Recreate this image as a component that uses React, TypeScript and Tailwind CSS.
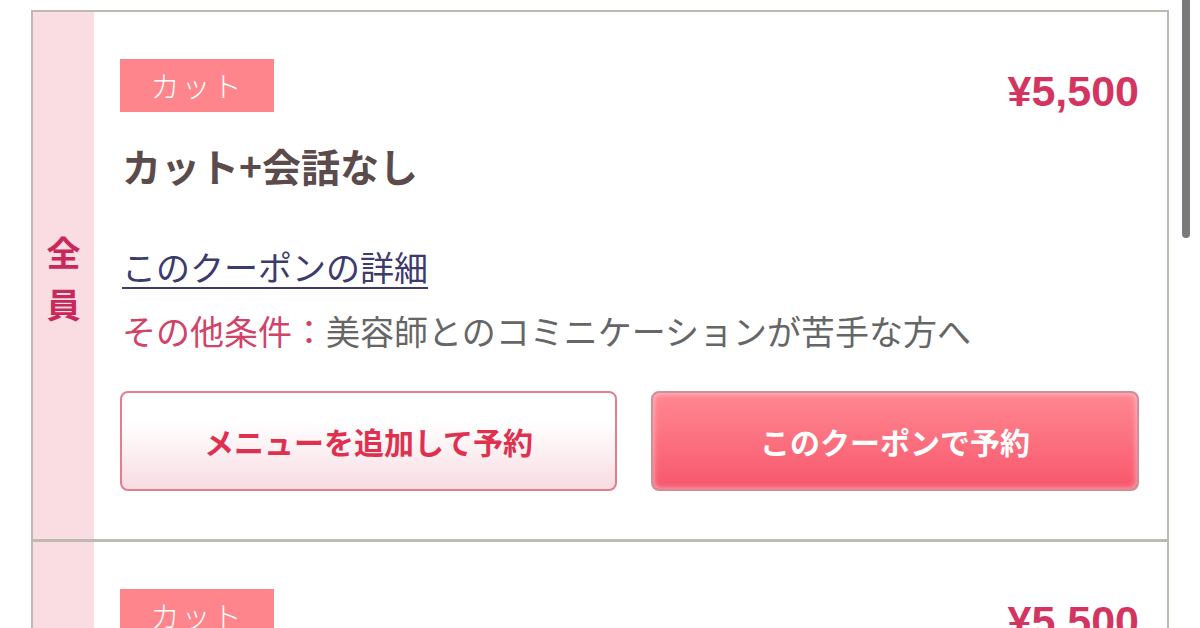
import React from "react";

const jp = { fontFamily: '"Noto Sans CJK JP", "Noto Sans", sans-serif' };
const num = { fontFamily: '"Liberation Sans", Arial, sans-serif' };

function Card({ first }: { first: boolean }) {
  return (
    <div className={`flex ${first ? "" : "border-t-[3px] border-[#bdbab2]"}`}>
      <div className="w-[61px] shrink-0 bg-[#f9dde3] flex flex-col items-center justify-center pt-[4px]">
        {first && (
          <div className="flex flex-col items-center gap-[18px] text-[34px] leading-none font-bold text-[#c9295a]" style={jp}>
            <span>全</span>
            <span>員</span>
          </div>
        )}
      </div>
      <div className="flex-1 pl-[26px] pr-[28px] pt-[47px] pb-[48px]">
        <div className="flex justify-between items-start">
          <div className="w-[154px] h-[53px] bg-[#fd858b] text-white text-[29px] font-light flex items-center justify-center leading-none tracking-[2px]" style={jp}>
            カット
          </div>
          <div className="text-[43px] font-bold text-[#d43560] leading-none mt-[11px]" style={num}>
            ¥5,500
          </div>
        </div>
        <div className="mt-[33px] text-[39px] font-bold text-[#5b4b4b] leading-none pl-[2px]" style={jp}>
          カット+会話なし
        </div>
        <div className="mt-[65px] pl-[2px] leading-none">
          <span className="text-[34px] leading-none text-[#3d3a6e] underline decoration-[2px] underline-offset-[6px]" style={jp}>
            このクーポンの詳細
          </span>
        </div>
        <div className="mt-[30px] pl-[2px] text-[34px] leading-none text-[#666666]" style={jp}>
          <span className="text-[#d04468]">その他条件：</span>美容師とのコミニケーションが苦手な方へ
        </div>
        <div className="mt-[43px] grid grid-cols-[497px_1fr] gap-[34px]">
          <button
            className="h-[100px] rounded-[8px] border-2 border-[#e47d8c] bg-gradient-to-b from-white from-30% to-[#f8dce2] text-[#e0304f] text-[30px] font-bold"
            style={jp}
          >
            メニューを追加して予約
          </button>
          <button
            className="h-[100px] rounded-[8px] border-2 border-[#cf8e99] bg-gradient-to-b from-[#ff8792] to-[#f7566c] text-white text-[30px] font-bold shadow-[inset_0_0_6px_rgba(255,255,255,0.6)]"
            style={jp}
          >
            このクーポンで予約
          </button>
        </div>
      </div>
    </div>
  );
}

export default function App() {
  return (
    <div className="relative w-[1200px] h-[628px] overflow-hidden bg-white">
      <div className="pl-[31px] pt-[10px]">
        <div className="w-[1138px] border-2 border-[#bdbab2] border-b-0 bg-white">
          <Card first={true} />
          <Card first={false} />
        </div>
      </div>
      <div className="absolute left-[1182px] top-0 w-[8px] h-[238px] rounded-b-[4px] bg-[#7a7a7a]" />
    </div>
  );
}
